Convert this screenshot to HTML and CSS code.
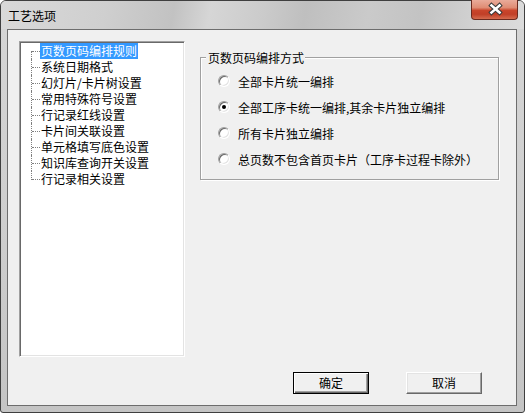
FILE: index.html
```html
<!DOCTYPE html>
<html lang="zh-CN">
<head>
<meta charset="utf-8">
<title>工艺选项</title>
<link rel="stylesheet" href="styles.css">
</head>
<body>
<div class="window">
  <div class="titlebar">
    <span class="title">工艺选项</span>
    <span class="close">
      <svg width="47" height="20" viewBox="0 0 47 20">
        <path d="M20.5 6.5 L28.5 13.5 M28.5 6.5 L20.5 13.5" stroke="#3a3a3a" stroke-width="4.6" stroke-linecap="square" fill="none"/>
        <path d="M20.5 6.5 L28.5 13.5 M28.5 6.5 L20.5 13.5" stroke="#ffffff" stroke-width="2.6" stroke-linecap="square" fill="none"/>
      </svg>
    </span>
  </div>
  <div class="client">
    <div class="main">
      <div class="tree">
        <ul>
          <li class="first"><span class="sel">页数页码编排规则</span></li>
          <li><span>系统日期格式</span></li>
          <li><span>幻灯片/卡片树设置</span></li>
          <li><span>常用特殊符号设置</span></li>
          <li><span>行记录红线设置</span></li>
          <li><span>卡片间关联设置</span></li>
          <li><span>单元格填写底色设置</span></li>
          <li><span>知识库查询开关设置</span></li>
          <li class="last"><span>行记录相关设置</span></li>
        </ul>
      </div>
      <div class="group">
        <div class="legend">页数页码编排方式</div>
        <div class="radios">
          <div class="radio"><span class="ring"></span><span>全部卡片统一编排</span></div>
          <div class="radio"><span class="ring checked"></span><span>全部工序卡统一编排,其余卡片独立编排</span></div>
          <div class="radio"><span class="ring"></span><span>所有卡片独立编排</span></div>
          <div class="radio"><span class="ring"></span><span>总页数不包含首页卡片（工序卡过程卡除外）</span></div>
        </div>
      </div>
    </div>
    <div class="buttons">
      <button class="btn default">确定</button>
      <button class="btn">取消</button>
    </div>
  </div>
</div>
</body>
</html>
```

FILE: styles.css
```css
html, body {
  margin: 0;
  padding: 0;
}
body {
  width: 525px;
  height: 413px;
  overflow: hidden;
  font-family: "Noto Sans CJK SC", "Noto Sans", sans-serif;
  font-size: 12px;
  color: #000;
  background: #fff;
}
.window {
  box-sizing: border-box;
  width: 525px;
  height: 413px;
  border: 1px solid #3f3f3f;
  border-radius: 6px 6px 3px 3px;
  background: linear-gradient(to bottom, #d6d6d6 0%, #cdcdcd 60%, #c4c4c4 100%);
  padding: 0 7px 6px 6px;
  display: flex;
  flex-direction: column;
}
.titlebar {
  height: 28px;
  margin: 0 -7px 0 -6px;
  border-radius: 5px 5px 0 0;
  display: flex;
  align-items: flex-start;
  justify-content: space-between;
  background: linear-gradient(100deg, #d9d9d9 0%, #cfcfcf 20%, #c2c2c2 33%, #d6d6d6 40%, #cbcbcb 50%, #bfbfbf 58%, #cacaca 70%, #c3c3c3 80%, #d4d4d4 92%, #dcdcdc 100%);
}
.title {
  padding-left: 7px;
  line-height: 14px;
  margin-top: 8px;
  font-size: 12px;
}
.close {
  display: block;
  width: 47px;
  height: 20px;
  margin-top: -1px;
  margin-right: 6px;
  box-sizing: border-box;
  border: 1px solid #6a2a1f;
  border-top: none;
  border-radius: 0 0 4px 4px;
  background: linear-gradient(to bottom, #e9ab9a 0%, #df8c74 40%, #c9452b 55%, #c13f27 75%, #d56b4e 100%);
  overflow: hidden;
}
.close svg {
  display: block;
  margin: -1px 0 0 -1px;
}
.client {
  box-sizing: border-box;
  width: 510px;
  height: 377px;
  border: 1px solid #6d6d6d;
  background: #f0f0f0;
  padding: 11px;
  display: flex;
  flex-direction: column;
}
.main {
  display: flex;
  align-items: flex-start;
  gap: 15px;
}
.tree {
  box-sizing: border-box;
  width: 166px;
  height: 316px;
  border: 1px solid;
  border-color: #a0a0a0 #ffffff #ffffff #a0a0a0;
  box-shadow: inset 1px 1px #696969, inset -1px -1px #e3e3e3;
  background: #fff;
  padding: 1px;
}
.tree ul {
  list-style: none;
  margin: 0;
  padding: 0;
}
.tree li {
  position: relative;
  height: 16px;
  line-height: 16px;
  padding-left: 19px;
  white-space: nowrap;
}
.tree li::before {
  content: "";
  position: absolute;
  left: 10px;
  top: 0;
  bottom: 0;
  border-left: 1px dotted #808080;
}
.tree li.first::before {
  top: 8px;
}
.tree li.last::before {
  bottom: auto;
  height: 9px;
}
.tree li::after {
  content: "";
  position: absolute;
  left: 11px;
  top: 8px;
  width: 8px;
  border-top: 1px dotted #808080;
}
.tree li span {
  display: inline-block;
  padding: 0 1px;
  height: 16px;
}
.tree li span.sel {
  background: #3399ff;
  color: #fff;
}
.group {
  box-sizing: border-box;
  width: 299px;
  height: 123px;
  margin-top: 16px;
  border: 1px solid #a0a0a0;
  box-shadow: inset 1px 1px #ffffff, 1px 1px #ffffff;
}
.legend {
  width: fit-content;
  margin: -7px 0 0 5px;
  padding: 0 1px 0 2px;
  line-height: 14px;
  background: #f0f0f0;
}
.radios {
  margin-top: 3px;
  padding-left: 17px;
}
.radio {
  height: 26px;
  display: flex;
  align-items: center;
  gap: 8px;
  white-space: nowrap;
}
.ring {
  box-sizing: border-box;
  width: 12px;
  height: 12px;
  border-radius: 50%;
  border: 1px solid;
  border-color: #a0a0a0 #ffffff #ffffff #a0a0a0;
  box-shadow: inset 1px 1px #696969, inset -1px -1px #e3e3e3;
  background: #fff;
  display: flex;
  align-items: center;
  justify-content: center;
  flex: none;
}
.ring.checked::after {
  content: "";
  width: 4px;
  height: 4px;
  border-radius: 50%;
  background: #000;
}
.buttons {
  margin-top: auto;
  display: flex;
  justify-content: flex-end;
  gap: 37px;
  padding-right: 23px;
}
.btn {
  box-sizing: border-box;
  width: 76px;
  height: 22px;
  margin: 0;
  padding: 0;
  font: inherit;
  font-size: 12px;
  color: #000;
  background: #f0f0f0;
  border: 1px solid;
  border-color: #ffffff #696969 #696969 #ffffff;
  box-shadow: inset -1px -1px #a0a0a0, inset 1px 1px #e3e3e3;
  border-radius: 0;
  line-height: 18px;
}
.btn.default {
  border: 1px solid #000;
  box-shadow: inset 1px 1px #ffffff, inset -1px -1px #696969, inset -2px -2px #a0a0a0;
}
```
